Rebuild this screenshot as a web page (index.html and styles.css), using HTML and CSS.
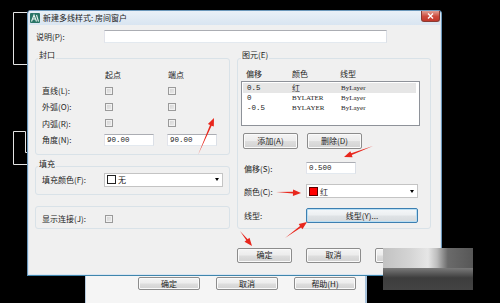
FILE: index.html
```html
<!DOCTYPE html>
<html lang="zh-CN">
<head>
    <meta charset="UTF-8">
    <meta name="viewport" content="width=device-width, initial-scale=1.0">
    <title>新建多线样式: 房间窗户</title>
    <link rel="stylesheet" href="styles.css">
</head>
<body>

<div class="desktop">
    <!-- drawing behind the dialogs -->
    <svg class="cad-lines" width="500" height="303" viewBox="0 0 500 303">
        <polyline points="27,12.5 13.5,12.5 13.5,64.5 27,64.5"/>
        <polyline points="27,152.5 25.5,152.5 25.5,131.5 13.5,131.5 13.5,164.5 27,164.5"/>
    </svg>

    <!-- parent dialog, mostly hidden -->
    <div class="window parent-window">
        <div class="parent-buttons">
            <button class="btn">确定</button>
            <button class="btn">取消</button>
            <button class="btn">帮助(H)</button>
        </div>
    </div>

    <div class="window dialog">
        <div class="titlebar">
            <svg class="app-icon" width="10" height="10" viewBox="0 0 10 10">
                <rect x="0" y="0" width="10" height="10" rx="1" fill="#2a7566"/>
                <path d="M1.5 8.5 L4 2 L6.5 8.5 M2.5 6 H5.5 M6.5 2 L8.5 8.5" stroke="#e8f3ee" stroke-width="1.1" fill="none"/>
            </svg>
            <span class="title">新建多线样式: 房间窗户</span>
            <span class="close-btn">
                <svg width="7" height="6" viewBox="0 0 7 6">
                    <path d="M1 0.5 L6 5.5 M6 0.5 L1 5.5" stroke="#fff" stroke-width="1.4"/>
                </svg>
            </span>
        </div>

        <div class="client">
            <div class="desc-row">
                <label>说明(P):</label>
                <div class="textbox desc"></div>
            </div>

            <div class="columns">
                <div class="col-left">
                    <fieldset class="group caps">
                        <legend>封口</legend>
                        <div class="caps-grid">
                            <span></span>
                            <span class="colhead">起点</span>
                            <span class="colhead">端点</span>

                            <label>直线(L):</label>
                            <span class="check"></span>
                            <span class="check"></span>

                            <label>外弧(O):</label>
                            <span class="check"></span>
                            <span class="check"></span>

                            <label>内弧(R):</label>
                            <span class="check"></span>
                            <span class="check"></span>

                            <label>角度(N):</label>
                            <div class="textbox num">90.00</div>
                            <div class="textbox num">90.00</div>
                        </div>
                    </fieldset>

                    <fieldset class="group fill">
                        <legend>填充</legend>
                        <div class="field-row">
                            <label>填充颜色(F):</label>
                            <div class="combo fill-combo">
                                <span class="swatch empty"></span>无
                                <span class="combo-arrow"></span>
                            </div>
                        </div>
                    </fieldset>

                    <fieldset class="group joints">
                        <div class="field-row">
                            <label>显示连接(J):</label>
                            <span class="check"></span>
                        </div>
                    </fieldset>
                </div>

                <fieldset class="group elements">
                    <legend>图元(E)</legend>
                    <div class="list-head">
                        <span>偏移</span>
                        <span>颜色</span>
                        <span>线型</span>
                    </div>
                    <div class="listbox">
                        <div class="list-row selected"><span class="mono">0.5</span><span>红</span><span class="serif">ByLayer</span></div>
                        <div class="list-row"><span class="mono">0</span><span class="serif">BYLATER</span><span class="serif">ByLayer</span></div>
                        <div class="list-row"><span class="mono">-0.5</span><span class="serif">BYLAYER</span><span class="serif">ByLayer</span></div>
                    </div>
                    <div class="elem-buttons">
                        <button class="btn">添加(A)</button>
                        <button class="btn">删除(D)</button>
                    </div>
                    <div class="prop-row offset-row">
                        <label>偏移(S):</label>
                        <div class="textbox num offset">0.500</div>
                    </div>
                    <div class="prop-row color-row">
                        <label>颜色(C):</label>
                        <div class="combo color-combo">
                            <span class="swatch red"></span>红
                            <span class="combo-arrow"></span>
                        </div>
                    </div>
                    <div class="prop-row ltype-row">
                        <label>线型:</label>
                        <button class="btn wide focused">线型(Y)...</button>
                    </div>
                </fieldset>
            </div>

            <div class="dialog-buttons">
                <button class="btn">确定</button>
                <button class="btn">取消</button>
                <button class="btn">帮助(H)</button>
            </div>
        </div>
    </div>

    <!-- blurred watermark -->
    <div class="mosaic">
        <div class="mosaic-top"></div>
        <div class="mosaic-bottom"></div>
    </div>

    <!-- red annotation arrows -->
    <svg class="marks" width="500" height="303" viewBox="0 0 500 303">
        <polygon points="198,155 211.6,125.7 213.8,126.6 214,118 207.9,124.1 210,125"/>
        <polygon points="373,146 351.2,153.3 350.3,151.2 344,157 352.6,157.2 351.8,155"/>
        <polygon points="276,192 293,193.6 292.9,195.9 301,193 293.1,189.5 293,191.8"/>
        <polygon points="285,238 301.1,227.4 302.4,229.3 307,222 298.7,224.1 300,226"/>
        <polygon points="240,231 246.3,240.3 244.5,241.8 252,246 249.5,237.8 247.7,239.2"/>
    </svg>
</div>

</body>
</html>
```

FILE: styles.css
```css
* {
    box-sizing: border-box;
}
body {
    margin: 0;
    width: 500px;
    height: 303px;
    overflow: hidden;
    background-color: #000;
    font-family: "Noto Sans CJK SC", "Liberation Sans", sans-serif;
    font-size: 8px;
    color: #1c1c1c;
}
.desktop {
    position: relative;
    width: 500px;
    height: 303px;
}
.cad-lines {
    position: absolute;
    left: 0;
    top: 0;
}
.cad-lines polyline {
    fill: none;
    stroke: #e4e4e4;
    stroke-width: 1;
}

/* windows on the desktop */
.window {
    position: absolute;
}
.parent-window {
    left: 85px;
    top: 240px;
    width: 282px;
    height: 70px;
    background-color: #f5f5f5;
    border-left: 1px solid #b7cbdf;
    border-right: 2px solid #a8c2db;
}
.parent-buttons {
    display: flex;
    gap: 16px;
    padding: 37px 0 0 52px;
}
.parent-buttons .btn {
    width: 62px;
    height: 13px;
}

.dialog {
    left: 27px;
    top: 10px;
    width: 415px;
    height: 266px;
    border: 1px solid #6b97ba;
    border-bottom-color: #3f86ad;
    border-radius: 4px 4px 0 0;
    background-color: #d9e5f1;
    padding: 0 1px 1px;
    display: flex;
    flex-direction: column;
}
.titlebar {
    height: 14px;
    display: flex;
    align-items: center;
    padding-left: 1px;
    background: linear-gradient(#e9f0f7, #d9e5f1);
}
.app-icon {
    margin-right: 3px;
}
.title {
    line-height: 10px;
    color: #1b1b1b;
}
.close-btn {
    margin-left: auto;
    align-self: flex-start;
    width: 19px;
    height: 11px;
    display: flex;
    align-items: center;
    justify-content: center;
    border: 1px solid #8a3b33;
    border-top: none;
    border-radius: 0 0 3px 3px;
    background: linear-gradient(#e3a094, #cc4a3c 55%, #c2382b);
}

.client {
    flex: 1;
    background-color: #f0f0f0;
    padding: 5px 9px 0 6px;
}
label {
    white-space: nowrap;
}
.desc-row {
    display: grid;
    grid-template-columns: 69px 283px;
    align-items: center;
    height: 13px;
}
.desc-row label {
    padding-left: 1px;
}

.columns {
    display: grid;
    grid-template-columns: 195px 194px;
    column-gap: 7px;
    margin-top: 7px;
}
.col-left {
    display: flex;
    flex-direction: column;
}

.group {
    margin: 0;
    padding: 0 6px;
    min-width: 0;
    border: 1px solid #d9e2e8;
    border-radius: 3px;
}
.group legend {
    margin-left: -4px;
    padding: 0 1px 6px;
    line-height: 10px;
}

.caps-grid {
    display: grid;
    grid-template-columns: 62px 63px 50px;
    grid-auto-rows: 16.4px;
    align-items: center;
    padding-bottom: 6px;
}
.colhead {
    margin-left: 1px;
}
.check {
    display: block;
    width: 8px;
    height: 8px;
    margin-left: 1px;
    border: 1px solid #9a9a9a;
    background: linear-gradient(135deg, #d2d2d2, #ececec);
    box-shadow: inset 0 0 0 1px #f1f1f1;
}

.textbox {
    height: 12px;
    background-color: #fff;
    border: 1px solid;
    border-color: #abadb3 #dbdfe6 #e3e9ef #e2e3ea;
}
.textbox.desc {
    height: 13px;
}
.textbox.num {
    width: 50px;
    padding-left: 2px;
    font-family: "Liberation Mono", monospace;
    font-size: 7.5px;
    line-height: 10px;
    color: #222;
}

.fill {
    margin-top: 4px;
    padding-bottom: 7px;
}
.joints {
    margin-top: 11px;
    padding-top: 5px;
    padding-bottom: 2px;
}
.field-row {
    display: grid;
    grid-template-columns: 62px auto;
    align-items: center;
    height: 14px;
}
.fill .field-row {
    margin-top: -2px;
}

.combo {
    display: flex;
    align-items: center;
    height: 14px;
    padding-left: 2px;
    background-color: #fff;
    border: 1px solid #c4c4c4;
}
.fill-combo {
    width: 119px;
}
.color-combo {
    width: 112px;
}
.swatch {
    width: 9px;
    height: 9px;
    margin-right: 2px;
    border: 1px solid #222;
}
.swatch.empty {
    background-color: #fff;
}
.swatch.red {
    background-color: #f00;
    border-color: #5a0000;
}
.combo-arrow {
    margin-left: auto;
    margin-right: 3px;
    border-left: 2.5px solid transparent;
    border-right: 2.5px solid transparent;
    border-top: 3px solid #000;
}

/* 图元 */
.elements {
    padding: 0 3px;
}
.elements legend {
    margin-left: 0;
}
.list-head {
    display: grid;
    grid-template-columns: 46px 48px auto;
    height: 15px;
    line-height: 15px;
    padding-left: 5px;
}
.listbox {
    width: 179px;
    height: 45px;
    padding: 1px 3px 0 1px;
    background-color: #fff;
    border: 1px solid #8e9299;
}
.list-row {
    display: grid;
    grid-template-columns: 45px 49px auto;
    height: 10px;
    line-height: 10px;
    padding-left: 4px;
}
.list-row.selected {
    background-color: #e6e6e6;
}
.mono {
    font-family: "Liberation Mono", monospace;
    font-size: 7.5px;
}
.serif {
    font-family: "Liberation Serif", serif;
    font-size: 7px;
}
.elem-buttons {
    display: flex;
    gap: 9px;
    margin-top: 7px;
    padding-left: 2px;
}
.elem-buttons .btn {
    height: 16px;
}
.prop-row {
    display: grid;
    grid-template-columns: 62px auto;
    align-items: center;
    padding-left: 3px;
}
.offset-row {
    margin-top: 13px;
}
.color-row,
.ltype-row {
    margin-top: 10px;
}

/* buttons */
.btn {
    width: 55px;
    height: 15px;
    padding: 0;
    font-family: inherit;
    font-size: 8px;
    line-height: 12px;
    color: #1c1c1c;
    border: 1px solid #8c8c8c;
    border-radius: 2px;
    background: linear-gradient(#f4f4f4 0%, #ececec 48%, #dedede 52%, #d2d2d2 100%);
    box-shadow: inset 0 0 0 1px #fafafa;
}
.btn.wide {
    width: 112px;
}
.btn.focused {
    border-color: #3c7fb1;
    box-shadow: inset 0 0 0 1px #b9def3;
    background: linear-gradient(#f4f7f9 0%, #eceff1 48%, #dfe3e6 52%, #d6dadd 100%);
}

.dialog-buttons {
    display: flex;
    gap: 14px;
    margin-top: 19px;
    padding-left: 202px;
}

/* blurred logo over the corner */
.mosaic {
    position: absolute;
    left: 383px;
    top: 248px;
    width: 90px;
    height: 42px;
    display: flex;
    flex-direction: column;
    background-color: #4a4a4a;
}
.mosaic-top {
    height: 20px;
    background: linear-gradient(to right, #c2c2c2 0%, #d4d4d4 30%, #e6e6e6 50%, #bdbdbd 60%, #6a6a6a 72%, #575757 100%);
}
.mosaic-bottom {
    flex: 1;
    background: linear-gradient(#7a7a7a, #3d3d3d 45%, #434343 100%);
}

.marks {
    position: absolute;
    left: 0;
    top: 0;
    pointer-events: none;
}
.marks polygon {
    fill: #e8271d;
}
```
